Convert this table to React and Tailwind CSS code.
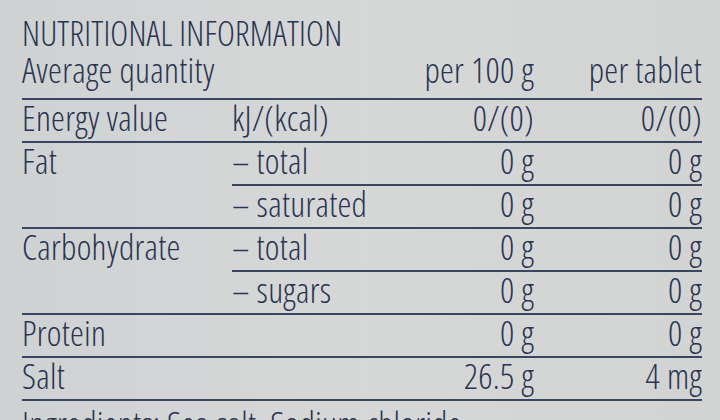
const rows = [
  { label: 'Energy value', sub: 'kJ/(kcal)', per100: '0/(0)', perTab: '0/(0)', line: 'full' },
  { label: 'Fat', sub: '– total', per100: '0 g', perTab: '0 g', line: 'sub' },
  { label: '', sub: '– saturated', per100: '0 g', perTab: '0 g', line: 'full' },
  { label: 'Carbohydrate', sub: '– total', per100: '0 g', perTab: '0 g', line: 'sub' },
  { label: '', sub: '– sugars', per100: '0 g', perTab: '0 g', line: 'full' },
  { label: 'Protein', sub: '', per100: '0 g', perTab: '0 g', line: 'full' },
  { label: 'Salt', sub: '', per100: '26.5 g', perTab: '4 mg', line: 'full' },
];

const NutritionLabel = () => {
  return (
    <div className="h-[420px] w-[720px] overflow-hidden bg-gradient-to-r from-[#cfd2d3] via-[#d6d8d8] to-[#d2d4d4] pt-[14px] pl-[22px] pr-[18px] font-['Open_Sans',sans-serif] [font-weight:360] font-stretch-condensed text-[#2a3450]">
      <div className="text-[34px] leading-[38px] tracking-[0.2px]">NUTRITIONAL INFORMATION</div>

      <div className="grid grid-cols-[210px_1fr_150px_168px] text-[35px] leading-[35px] tracking-[0.3px]">
        {/* Header */}
        <div className="col-span-2 border-b-2 border-[#3a4560] pb-[10px] leading-[36px]">Average quantity</div>
        <div className="border-b-2 border-[#3a4560] pb-[10px] text-right leading-[36px]">per 100 g</div>
        <div className="border-b-2 border-[#3a4560] pb-[10px] text-right leading-[36px]">per tablet</div>

        {rows.map((r, i) => (
          <div key={i} className="contents">
            <div className={r.line === 'full' ? 'h-[43px] border-b-2 border-[#3a4560]' : 'h-[43px]'}>
              {r.label}
            </div>
            <div className="h-[43px] border-b-2 border-[#3a4560]">{r.sub}</div>
            <div className="h-[43px] border-b-2 border-[#3a4560] text-right">{r.per100}</div>
            <div className="h-[43px] border-b-2 border-[#3a4560] text-right">{r.perTab}</div>
          </div>
        ))}
      </div>

      <div className="pt-[2px] text-[35px] leading-[41px] tracking-[0.3px] whitespace-nowrap">
        Ingredients: Sea salt, Sodium chloride
      </div>
    </div>
  );
};

export default function App() {
  return <NutritionLabel />;
}
